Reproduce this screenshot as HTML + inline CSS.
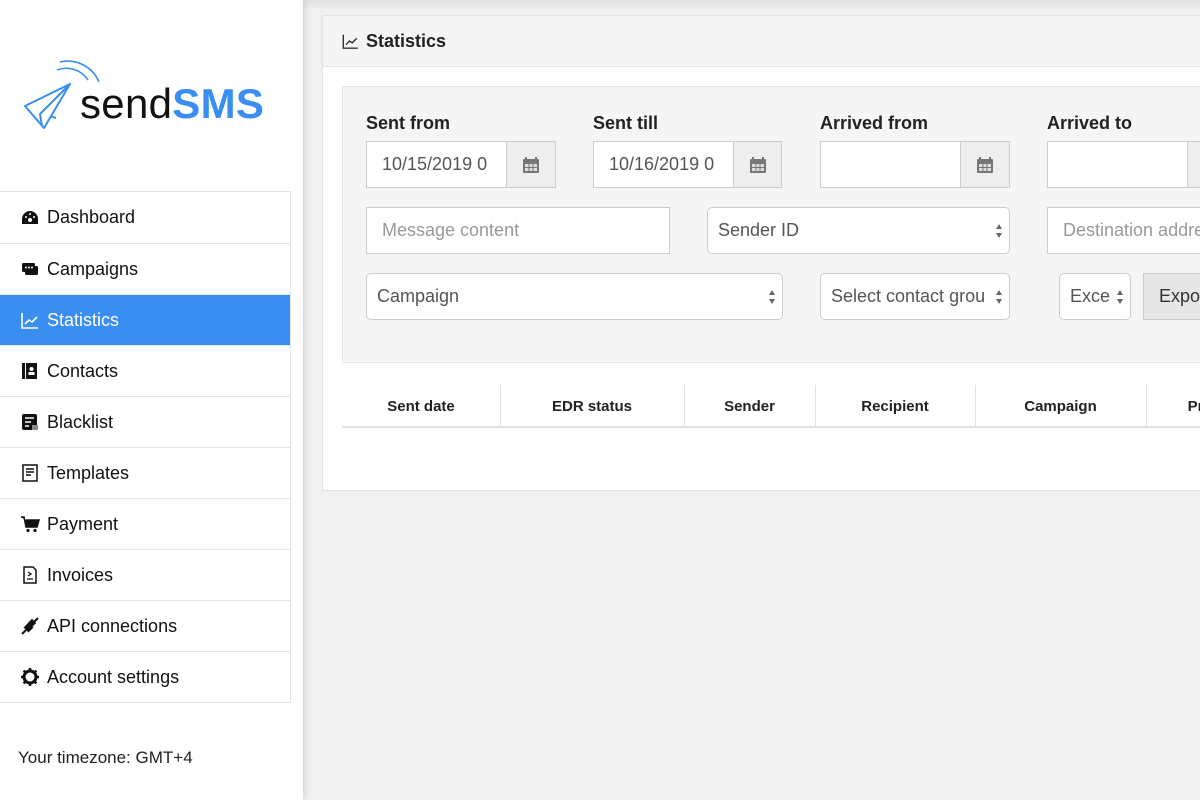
<!DOCTYPE html>
<html><head><meta charset="utf-8"><style>
*{box-sizing:border-box;margin:0;padding:0}
body{width:1200px;height:800px;overflow:hidden;background:#f0f0f0;font-family:"Liberation Sans",Arial,sans-serif;color:#222;position:relative}
.side{position:absolute;left:0;top:0;width:303px;height:800px;background:#fff;box-shadow:2px 0 6px rgba(0,0,0,.12);z-index:2}
.nav{position:absolute;left:0;top:191px;width:291px;border:1px solid #e3e3e3;border-left:none}
.nav div{height:51px;border-top:1px solid #e6e6e6;display:flex;align-items:center;padding-left:20px;font-size:18px;color:#111}
.nav div:first-child{border-top:none}
.nav div.act{background:#3a8eef;color:#fff}
.nav svg{width:20px;height:20px;margin-right:7px;flex:none}
.tz{position:absolute;left:18px;top:748px;font-size:17px;color:#222}
.topsh{position:absolute;left:303px;top:0;width:897px;height:10px;background:linear-gradient(#e2e2e2,#f0f0f0)}
.panel{position:absolute;left:322px;top:15px;width:900px;height:476px;background:#fff;border:1px solid #e2e2e2}
.ph{height:51px;background:#f5f5f5;border-bottom:1px solid #e6e6e6;display:flex;align-items:center;padding-left:18px;font-weight:bold;font-size:18px}
.well{position:absolute;left:19px;top:70px;width:900px;height:277px;background:#f5f5f5;border:1px solid #e6e6e6}
.a{position:absolute}
.lbl{font-weight:bold;font-size:18px;color:#222}
.inp{background:#fff;border:1px solid #ccc;height:47px;display:flex;align-items:center;padding-left:15px;font-size:18px;color:#555}
.ph2{color:#999}
.add{background:#eee;border:1px solid #ccc;height:47px;display:flex;align-items:center;justify-content:center}
.sel{border-radius:5px;padding-left:10px}
.arr{position:absolute;right:6px;top:15px;width:8px;height:16px}
.th{position:absolute;top:385px;height:42px;font-size:15px;font-weight:bold;display:flex;align-items:center;justify-content:center;color:#222}
.sep{position:absolute;top:385px;width:1px;height:42px;background:#e2e2e2}
</style></head><body>
<div class="side">
  <svg class="a" style="left:22px;top:58px" width="82" height="72" viewBox="0 0 82 72">
    <path d="M3 48 L48 26 L22 70 Z M48 26 L18 56 L20 68 M28 58 L34 60" fill="none" stroke="#3a8eef" stroke-width="2" stroke-linejoin="round"/>
    <path d="M35 12 A26 26 0 0 1 66 22 M38 4 A34 34 0 0 1 77 24" fill="none" stroke="#3a8eef" stroke-width="1.6"/>
  </svg>
  <div class="a" style="left:80px;top:78px;font-size:42px;letter-spacing:0.3px;line-height:52px;white-space:nowrap"><span style="color:#111">send</span><span style="color:#3a8eef;font-weight:bold">SMS</span></div>
  <div class="nav">
    <div><svg viewBox="0 0 20 20"><path d="M10 3a8 8 0 0 0-8 8v5h16v-5a8 8 0 0 0-8-8z" fill="#111"/><circle cx="10" cy="12" r="2" fill="#fff"/><circle cx="6" cy="9" r="1" fill="#fff"/><circle cx="14" cy="9" r="1" fill="#fff"/><circle cx="10" cy="6" r="1" fill="#fff"/></svg>Dashboard</div>
    <div><svg viewBox="0 0 20 20"><rect x="2" y="4" width="13" height="9" rx="1.5" fill="#111"/><rect x="5" y="7" width="13" height="9" rx="1.5" fill="#111"/><circle cx="6" cy="8.5" r="1" fill="#fff"/><circle cx="9" cy="8.5" r="1" fill="#fff"/><circle cx="12" cy="8.5" r="1" fill="#fff"/></svg>Campaigns</div>
    <div class="act"><svg viewBox="0 0 20 20"><path d="M2 3v15h16M5 14l4-4 3 2 5-5" fill="none" stroke="#fff" stroke-width="1.6"/></svg>Statistics</div>
    <div><svg viewBox="0 0 20 20"><rect x="2" y="2" width="3" height="16" fill="#111"/><rect x="6" y="2" width="11" height="16" fill="#111"/><circle cx="11.5" cy="8" r="2" fill="#fff"/><rect x="8.5" y="11" width="6" height="3" fill="#fff"/></svg>Contacts</div>
    <div><svg viewBox="0 0 20 20"><rect x="2" y="2" width="15" height="16" rx="2" fill="#111"/><path d="M5 6h9M5 10h6M5 14h4" stroke="#fff" stroke-width="1.5"/><rect x="12" y="13" width="6" height="5" fill="#888"/></svg>Blacklist</div>
    <div><svg viewBox="0 0 20 20"><rect x="3" y="2" width="14" height="16" fill="none" stroke="#111" stroke-width="1.5"/><path d="M6 6h8M6 9h8M6 12h5" stroke="#111" stroke-width="1.5"/></svg>Templates</div>
    <div><svg viewBox="0 0 20 20"><path d="M1 3h3l2 10h11l2-7H6" fill="#111" stroke="#111" stroke-width="1.5"/><circle cx="8" cy="16.5" r="1.6" fill="#111"/><circle cx="15" cy="16.5" r="1.6" fill="#111"/></svg>Payment</div>
    <div><svg viewBox="0 0 20 20"><path d="M4 2h9l3 3v13H4z" fill="none" stroke="#111" stroke-width="1.5"/><path d="M8 7l3 2-3 2M7 14h6" stroke="#111" stroke-width="1.3" fill="none"/></svg>Invoices</div>
    <div><svg viewBox="0 0 20 20"><path d="M2 18l4-4M14 6l4-4" stroke="#111" stroke-width="2"/><rect x="5" y="8" width="7" height="7" transform="rotate(45 8.5 11.5)" fill="#111"/><rect x="9" y="4" width="6" height="6" transform="rotate(45 12 7)" fill="#111"/></svg>API connections</div>
    <div><svg viewBox="0 0 20 20"><circle cx="10" cy="10" r="6" fill="none" stroke="#111" stroke-width="3"/><path d="M10 1v4M10 15v4M1 10h4M15 10h4M3.6 3.6l2.8 2.8M13.6 13.6l2.8 2.8M3.6 16.4l2.8-2.8M13.6 6.4l2.8-2.8" stroke="#111" stroke-width="2.5"/></svg>Account settings</div>
  </div>
  <div class="tz">Your timezone: GMT+4</div>
</div>
<div class="topsh"></div>
<div class="panel">
  <div class="ph"><svg width="19" height="18" viewBox="0 0 20 20" style="margin-right:6px"><path d="M2 3v15h16M5 14l4-4 3 2 5-5" fill="none" stroke="#333" stroke-width="1.6"/></svg>Statistics</div>
  <div class="well"></div>
</div>
<div class="a lbl" style="left:366px;top:113px">Sent from</div>
<div class="a lbl" style="left:593px;top:113px">Sent till</div>
<div class="a lbl" style="left:820px;top:113px">Arrived from</div>
<div class="a lbl" style="left:1047px;top:113px">Arrived to</div>

<div class="a inp" style="left:366px;top:141px;width:141px;white-space:nowrap;overflow:hidden">10/15/2019 0</div>
<div class="a add" style="left:506px;top:141px;width:50px"><svg width="18" height="18" viewBox="0 0 18 18"><rect x="1" y="3" width="16" height="14" rx="1" fill="#777"/><rect x="3" y="8" width="12" height="7" fill="#ddd"/><path d="M4 1v4M14 1v4" stroke="#777" stroke-width="2"/><path d="M3 11.5h12M7 8v7M11 8v7" stroke="#777"/></svg></div>
<div class="a inp" style="left:593px;top:141px;width:141px;white-space:nowrap;overflow:hidden">10/16/2019 0</div>
<div class="a add" style="left:733px;top:141px;width:49px"><svg width="18" height="18" viewBox="0 0 18 18"><rect x="1" y="3" width="16" height="14" rx="1" fill="#777"/><rect x="3" y="8" width="12" height="7" fill="#ddd"/><path d="M4 1v4M14 1v4" stroke="#777" stroke-width="2"/><path d="M3 11.5h12M7 8v7M11 8v7" stroke="#777"/></svg></div>
<div class="a inp" style="left:820px;top:141px;width:141px"></div>
<div class="a add" style="left:960px;top:141px;width:50px"><svg width="18" height="18" viewBox="0 0 18 18"><rect x="1" y="3" width="16" height="14" rx="1" fill="#777"/><rect x="3" y="8" width="12" height="7" fill="#ddd"/><path d="M4 1v4M14 1v4" stroke="#777" stroke-width="2"/><path d="M3 11.5h12M7 8v7M11 8v7" stroke="#777"/></svg></div>
<div class="a inp" style="left:1047px;top:141px;width:141px"></div>
<div class="a add" style="left:1187px;top:141px;width:50px"></div>

<div class="a inp ph2" style="left:366px;top:207px;width:304px">Message content</div>
<div class="a inp sel" style="left:707px;top:207px;width:303px;color:#555">Sender ID<svg class="arr" viewBox="0 0 8 16"><path d="M4 1L7 6H1zM4 15L7 10H1z" fill="#666"/></svg></div>
<div class="a inp ph2" style="left:1047px;top:207px;width:200px;white-space:nowrap">Destination address</div>

<div class="a inp sel" style="left:366px;top:273px;width:417px">Campaign<svg class="arr" viewBox="0 0 8 16"><path d="M4 1L7 6H1zM4 15L7 10H1z" fill="#666"/></svg></div>
<div class="a inp sel" style="left:820px;top:273px;width:190px;white-space:nowrap;overflow:hidden">Select contact grou<svg class="arr" viewBox="0 0 8 16" style="background:#fff"><path d="M4 1L7 6H1zM4 15L7 10H1z" fill="#666"/></svg></div>
<div class="a inp sel" style="left:1059px;top:273px;width:72px">Exce<svg class="arr" viewBox="0 0 8 16"><path d="M4 1L7 6H1zM4 15L7 10H1z" fill="#666"/></svg></div>
<div class="a" style="left:1143px;top:273px;width:80px;height:47px;background:#e6e6e6;border:1px solid #ccc;font-size:18px;display:flex;align-items:center;padding-left:15px;color:#333">Export</div>

<div class="th" style="left:342px;width:158px">Sent date</div>
<div class="th" style="left:500px;width:184px">EDR status</div>
<div class="th" style="left:684px;width:131px">Sender</div>
<div class="th" style="left:815px;width:160px">Recipient</div>
<div class="th" style="left:975px;width:171px">Campaign</div>
<div class="th" style="left:1146px;width:120px">Price</div>
<div class="sep" style="left:500px"></div><div class="sep" style="left:684px"></div><div class="sep" style="left:815px"></div><div class="sep" style="left:975px"></div><div class="sep" style="left:1146px"></div>
<div class="a" style="left:342px;top:426px;width:858px;height:2px;background:#e2e2e2"></div>
</body></html>
